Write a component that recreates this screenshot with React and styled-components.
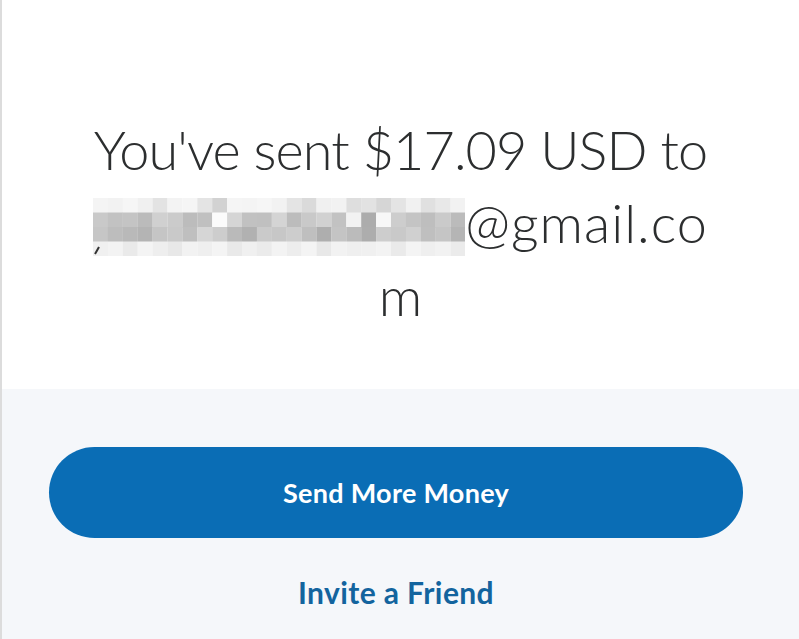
import React from "react";
import styled, { createGlobalStyle } from "styled-components";

const GlobalStyle = createGlobalStyle`
  html, body {
    margin: 0;
    padding: 0;
    background: #f5f7fa;
  }
  body {
    font-family: Lato, "Open Sans", "Liberation Sans", sans-serif;
  }
`;

const Page = styled.div`
  width: 799px;
  height: 639px;
  border-left: 2px solid #dcdcdc;
  box-sizing: border-box;
  display: flex;
  flex-direction: column;
  overflow: hidden;
`;

const Top = styled.section`
  height: 389px;
  flex-shrink: 0;
  background: #fff;
  box-sizing: border-box;
  padding-top: 113px;
`;

const Heading = styled.h1`
  margin: 0;
  font-weight: 300;
  font-size: 54px;
  line-height: 73px;
  color: #2c2e2f;
  text-align: center;
`;

const Line = styled.div`
  display: flex;
  justify-content: center;
  align-items: baseline;
  white-space: nowrap;
  letter-spacing: ${(p) => p.$spacing || "0"};
`;

const Bottom = styled.section`
  flex: 1;
  display: flex;
  flex-direction: column;
  align-items: center;
  padding: 58px 56px 0 47px;
`;

const PrimaryButton = styled.button`
  width: 694px;
  height: 91px;
  border: none;
  border-radius: 46px;
  background: #0a6db5;
  color: #fff;
  font-family: inherit;
  font-weight: 700;
  font-size: 27px;
  letter-spacing: 0.3px;
  cursor: pointer;
`;

const TextLink = styled.a`
  margin-top: 36px;
  color: #13649e;
  font-weight: 700;
  font-size: 30px;
  letter-spacing: 0.4px;
  text-decoration: none;
  cursor: pointer;
`;

const shades = [
  ["#f4f4f4", "#f2f2f2", "#f6f6f6", "#f0f0f0", "#e3e3e3", "#f3f3f3", "#f5f5f5", "#e4e4e4", "#d2d2d2", "#f5f5f5", "#f4f4f4", "#f6f6f6", "#f2f2f2", "#e4e4e4", "#dadada", "#f0f0f0", "#f2f2f2", "#dedede", "#e2e2e2", "#d6d6d6", "#e4e4e4", "#f1f1f1", "#e0e0e0", "#e8e8e8", "#f2f2f2"],
  ["#c9c9c9", "#c2c2c2", "#c4c4c4", "#bbbbbb", "#d0d0d0", "#cbcbcb", "#bcbcbc", "#c0c0c0", "#fbfbfb", "#d5d5d5", "#c1c1c1", "#c0c0c0", "#d4d4d4", "#bcbcbc", "#c9c9c9", "#d1d1d1", "#c2c2c2", "#f2f2f2", "#acacac", "#f7f7f7", "#cdcdcd", "#c4c4c4", "#bebebe", "#cacaca", "#bbbbbb"],
  ["#c6c6c6", "#bdbdbd", "#b9b9b9", "#b4b4b4", "#c5c5c5", "#c9c9c9", "#bfbfbf", "#d6d6d6", "#cdcdcd", "#bababa", "#b1b1b1", "#cacaca", "#c7c7c7", "#cdcdcd", "#bfbfbf", "#aeaeae", "#c4c4c4", "#bbbbbb", "#adadad", "#cdcdcd", "#c9c9c9", "#d0d0d0", "#bfbfbf", "#c5c5c5", "#b5b5b5"],
  ["#f0f0f0", "#f3f3f3", "#eaeaea", "#f4f4f4", "#eeeeee", "#e8e8e8", "#f2f2f2", "#efefef", "#f4f4f4", "#e9e9e9", "#f0f0f0", "#ebebeb", "#f3f3f3", "#ededed", "#f4f4f4", "#e8e8e8", "#f2f2f2", "#efefef", "#f0f0f0", "#f3f3f3", "#eaeaea", "#f4f4f4", "#efefef", "#f2f2f2", "#ebebeb"],
];

const Redacted = () => (
  <svg width="372" height="58" viewBox="0 0 372 58" style={{ alignSelf: "center", marginTop: "8px" }}>
    {shades.map((row, r) =>
      row.map((c, i) => (
        <rect key={`${r}-${i}`} x={i * 14.9} y={r * 14.5} width="15" height="15" fill={c} />
      ))
    )}
    <path d="M2 56 L6 49" stroke="#333" strokeWidth="2" />
  </svg>
);

export default function App() {
  return (
    <>
      <GlobalStyle />
      <Page>
        <Top>
          <Heading>
            <Line $spacing="-0.9px">You've sent $17.09 USD to</Line>
            <Line $spacing="1px">
              <Redacted />
              @gmail.co
            </Line>
            <Line>m</Line>
          </Heading>
        </Top>
        <Bottom>
          <PrimaryButton>Send More Money</PrimaryButton>
          <TextLink>Invite a Friend</TextLink>
        </Bottom>
      </Page>
    </>
  );
}
